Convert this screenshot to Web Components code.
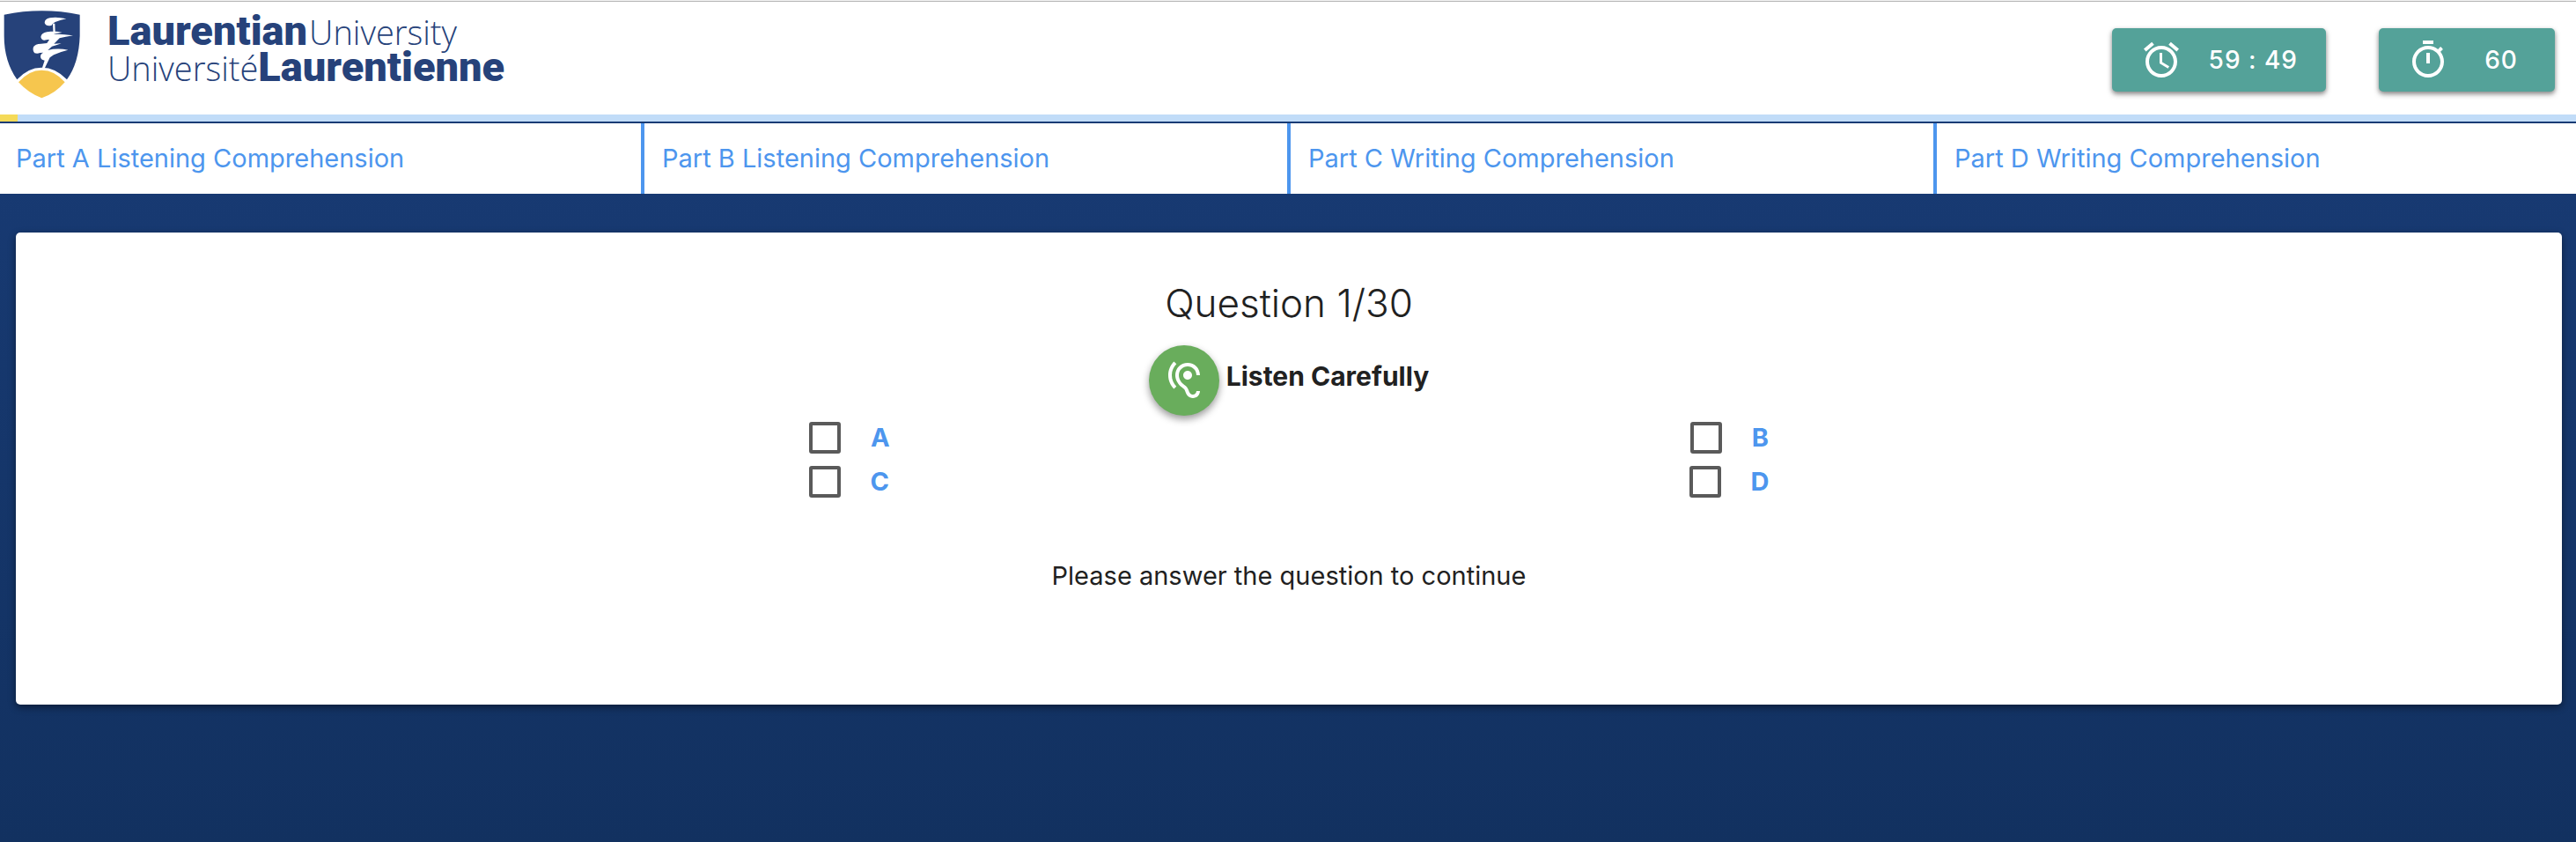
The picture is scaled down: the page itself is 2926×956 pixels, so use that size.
<!DOCTYPE html>
<html lang="en">
<head>
<meta charset="utf-8">
<meta name="viewport" content="width=device-width, initial-scale=1">
<title>Laurentian University – Placement Test</title>
<style>
html { height: 100%; }
body { margin: 0; min-height: 100%; font-family: Inter, "Liberation Sans", sans-serif; font-size: 29px; line-height: 40px; color: #212121; background: linear-gradient(#193c77, #123160); }
</style>
</head>
<body>
<exam-page></exam-page>

<template id="page-t">
<style>
:host { display: block; }
.bar { height: 8px; background: #c1dcf8; border-bottom: 2px solid #183b75; }
.bar span { display: block; width: 20px; height: 100%; background: #f5da58; }
nav { display: flex; }
</style>
<exam-header></exam-header>
<div class="bar" role="progressbar" aria-label="Exam progress"><span></span></div>
<nav>
<part-tab class="first">Part A Listening Comprehension</part-tab>
<part-tab>Part B Listening Comprehension</part-tab>
<part-tab>Part C Writing Comprehension</part-tab>
<part-tab class="last">Part D Writing Comprehension</part-tab>
</nav>
<question-card></question-card>
</template>

<template id="header-t">
<style>
:host { display: flex; align-items: flex-start; justify-content: space-between; box-sizing: border-box; height: 130px; background: #fff; border-top: 1px solid #f4f4f4; box-shadow: inset 0 1px #b5b5b5; padding: 1px 24px 0 0; }
.logo { display: flex; color: #26427a; text-decoration: none; }
svg { display: block; width: 96px; height: 112px; margin-right: 26px; }
.words { padding-top: 12px; font-family: "Open Sans", sans-serif; font-size: 38px; line-height: 41px; white-space: nowrap; }
.words div { display: flex; align-items: baseline; height: 41px; }
.b { font-family: Roboto, sans-serif; font-size: 47px; font-weight: 900; }
.l { font-weight: 300; }
.b + .l { margin-left: 2px; }
.timers { display: flex; gap: 60px; padding-top: 30px; }
</style>
<a class="logo" href="#" aria-label="Laurentian University">
<svg viewBox="0 6 288 336" aria-hidden="true">
<path fill="#26427a" d="M14 50Q143 24 272 50V122Q269 214 228 271Q190 230 142 230Q95 230 58 271Q14 208 14 122Z"/>
<path fill="#f6c64e" d="M63 280Q98 239 142 239Q187 239 221 280Q188 319 142 334Q98 318 63 280Z"/>
<path fill="#fff" d="M152 78Q152 64 170 61Q192 56 226 64Q208 67 188 75Q178 80 176 86Q158 92 152 78ZM180 80L187 80L188 108L182 122ZM139 126Q141 112 160 109Q190 103 212 111Q194 113 180 117Q205 114 249 121Q222 125 203 130L184 149L209 148Q190 155 177 158L163 171Q195 163 232 170Q206 176 183 187L170 196L152 233L144 230L152 206Q138 204 138 192Q138 183 148 179Q140 179 136 180Q128 184 118 181Q110 172 114 160Q119 150 140 149L160 147L168 135Q160 134 158 136Q142 140 139 126Z"/>
</svg>
<div class="words"><div><span class="b">Laurentian</span><span class="l">University</span></div><div><span class="l">Université</span><span class="b">Laurentienne</span></div></div>
</a>
<div class="timers">
<timer-button icon="alarm">59 : 49</timer-button>
<timer-button icon="timer">60</timer-button>
</div>
</template>

<template id="timer-t">
<style>
:host { display: block; }
button { display: flex; align-items: center; gap: 30px; height: 72px; padding: 0 32px; border: 0; border-radius: 5px; background: #54a299; color: #fff; font: 500 28px/40px Inter, sans-serif; letter-spacing: 1px; box-shadow: 0 3px 6px rgba(0,0,0,.35), 0 2px 4px rgba(0,0,0,.2); }
svg { width: 48px; height: 48px; fill: #fff; }
span { min-width: 58px; text-align: center; }
</style>
<button type="button"><svg viewBox="0 0 24 24" aria-hidden="true"><path/></svg><span><slot></slot></span></button>
</template>

<template id="tab-t">
<style>
:host { display: block; flex: 1 1 0; background: #fff; border-left: 4px solid #4d96ee; padding: 0 4px 0 20px; }
:host(.first) { border-left: 0; padding-left: 18px; }
:host(.last) { padding-right: 0; }
a { display: block; padding: 20px 0; color: #4d96ee; text-decoration: none; white-space: nowrap; }
</style>
<a href="#"><slot></slot></a>
</template>

<template id="card-t">
<style>
:host { display: block; box-sizing: border-box; min-height: 536px; margin: 44px 16px 0 18px; padding-top: 48px; border-radius: 5px; background: #fff; text-align: center; box-shadow: 0 3px 8px rgba(0,0,0,.45); }
h1 { margin: 0; font-size: 44px; line-height: 64px; font-weight: 300; }
.listen { display: flex; justify-content: center; gap: 8px; margin-top: 16px; font-size: 30px; font-weight: 700; line-height: 70px; }
button { width: 80px; height: 80px; padding: 16px; border: 0; border-radius: 50%; background: #69ad5c; box-shadow: 0 4px 8px rgba(0,0,0,.4); }
svg { display: block; width: 48px; height: 48px; fill: #fff; }
.row { display: flex; justify-content: space-evenly; }
p { margin: 62px 0 0; }
</style>
<h1>Question 1/30</h1>
<div class="listen"><button type="button" aria-label="Play the recording"><svg viewBox="0 0 24 24"><path d="M17 20c-.29 0-.56-.06-.76-.15-.71-.37-1.21-.88-1.71-2.38-.51-1.56-1.47-2.29-2.39-3-.79-.61-1.61-1.24-2.32-2.53C9.29 10.98 9 9.93 9 9c0-2.8 2.2-5 5-5s5 2.200 5 5h2c0-3.930-3.070-7-7-7S7 5.070 7 9c0 1.260.38 2.650 1.070 3.900.91 1.650 1.980 2.480 2.850 3.150.81.62 1.390 1.070 1.710 2.050.6 1.820 1.370 2.840 2.730 3.550.51.23 1.070.35 1.640.35 2.210 0 4-1.790 4-4h-2c0 1.100-.9 2-2 2zM7.640 2.640L6.220 1.220C4.230 3.210 3 5.960 3 9s1.230 5.790 3.220 7.780l1.410-1.410C6.010 13.740 5 11.490 5 9s1.010-4.740 2.640-6.360zM11.500 9c0 1.380 1.120 2.500 2.500 2.500s2.500-1.120 2.500-2.500-1.120-2.500-2.500-2.500-2.500 1.120-2.500 2.500z"/></svg></button><span>Listen Carefully</span></div>
<div class="row"><answer-option>A</answer-option><answer-option>B</answer-option></div>
<div class="row"><answer-option>C</answer-option><answer-option>D</answer-option></div>
<p>Please answer the question to continue</p>
</template>

<template id="option-t">
<style>
:host { display: block; }
label { display: flex; align-items: center; height: 50px; padding: 0 8px; color: #4d96ee; font-weight: 700; }
input { appearance: none; box-sizing: border-box; width: 36px; height: 36px; margin: 0 34px 0 0; border: 4px solid #5a5a5a; border-radius: 3px; background: #fff; }
</style>
<label><input type="checkbox"><slot></slot></label>
</template>

<script>
class Base extends HTMLElement {
  constructor() {
    super();
    this.attachShadow({ mode: "open" }).append(document.getElementById(this.constructor.tpl).content.cloneNode(true));
  }
}
const ICONS = {
  alarm: "M22 5.720l-4.600-3.860-1.290 1.530 4.600 3.860L22 5.720zM7.880 3.390L6.600 1.860 2 5.710l1.290 1.530 4.590-3.850zM12.500 8H11v6l4.750 2.850.75-1.230-4-2.370V8zM12 4c-4.970 0-9 4.030-9 9s4.020 9 9 9c4.970 0 9-4.030 9-9s-4.030-9-9-9zm0 16c-3.870 0-7-3.130-7-7s3.130-7 7-7 7 3.130 7 7-3.130 7-7 7z",
  timer: "M15 1H9v2h6V1zm-4 13h2V8h-2v6zm8.030-6.610l1.420-1.420c-.43-.51-.9-.99-1.410-1.410l-1.420 1.420C16.070 4.740 14.120 4 12 4c-4.970 0-9 4.030-9 9s4.020 9 9 9 9-4.030 9-9c0-2.120-.74-4.070-1.970-5.610zM12 20c-3.870 0-7-3.130-7-7s3.130-7 7-7 7 3.130 7 7-3.130 7-7 7z"
};
customElements.define("answer-option", class extends Base { static tpl = "option-t"; });
customElements.define("part-tab", class extends Base { static tpl = "tab-t"; });
customElements.define("timer-button", class extends Base {
  static tpl = "timer-t";
  connectedCallback() { this.shadowRoot.querySelector("path").setAttribute("d", ICONS[this.getAttribute("icon")]); }
});
customElements.define("exam-header", class extends Base { static tpl = "header-t"; });
customElements.define("question-card", class extends Base { static tpl = "card-t"; });
customElements.define("exam-page", class extends Base { static tpl = "page-t"; });
</script>
</body>
</html>
